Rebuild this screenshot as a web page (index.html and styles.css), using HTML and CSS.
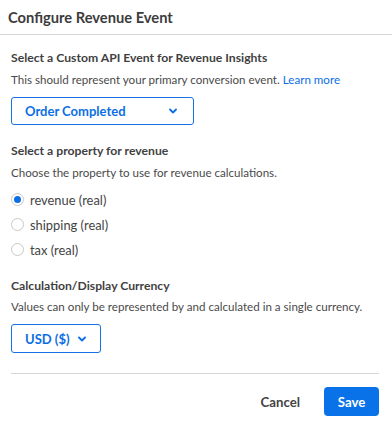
FILE: index.html
```html
<!DOCTYPE html>
<html>
<head>
<meta charset="utf-8">
<link rel="stylesheet" href="styles.css">
</head>
<body>
<div class="modal">
  <div class="header"><h1 class="title">Configure Revenue Event</h1></div>
  <div class="content">
    <h2 class="heading">Select a Custom API Event for Revenue Insights</h2>
    <p class="desc">This should represent your primary conversion event. <a class="link" href="#">Learn more</a></p>
    <button class="select select-event">
      <span>Order Completed</span>
      <svg class="chev" width="8" height="6" viewBox="0 0 8 6"><path d="M1 1.5 L4 4.5 L7 1.5" fill="none" stroke="currentColor" stroke-width="1.8" stroke-linecap="round" stroke-linejoin="round"/></svg>
    </button>

    <h2 class="heading h-gap">Select a property for revenue</h2>
    <p class="desc">Choose the property to use for revenue calculations.</p>
    <div class="radios">
      <label class="radio"><span class="dot checked"></span><span>revenue (real)</span></label>
      <label class="radio"><span class="dot"></span><span>shipping (real)</span></label>
      <label class="radio"><span class="dot"></span><span>tax (real)</span></label>
    </div>

    <h2 class="heading h-gap2">Calculation/Display Currency</h2>
    <p class="desc d-tight">Values can only be represented by and calculated in a single currency.</p>
    <button class="select select-cur">
      <span>USD ($)</span>
      <svg class="chev" width="8" height="6" viewBox="0 0 8 6"><path d="M1 1.5 L4 4.5 L7 1.5" fill="none" stroke="currentColor" stroke-width="1.8" stroke-linecap="round" stroke-linejoin="round"/></svg>
    </button>

    <div class="footer">
      <button class="btn-cancel">Cancel</button>
      <button class="btn-save">Save</button>
    </div>
  </div>
</div>
</body>
</html>
```
FILE: styles.css
```css
* { box-sizing: border-box; }
html, body { margin: 0; padding: 0; background: #fff; }
body { font-family: Lato, "Liberation Sans", sans-serif; color: #454545; }
.modal { width: 392px; }
.header {
  height: 35px;
  border-bottom: 1px solid #d8d8d8;
  padding-left: 8px;
  display: flex;
  align-items: center;
}
.title { margin: 0; font-size: 14.7px; font-weight: 700; color: #3c3c3c; line-height: 18px; }
.content { padding: 15px 13px 0 11px; }
.heading { margin: 0; font-size: 12.2px; font-weight: 700; line-height: 16px; color: #3f3f3f; }
.h-gap { margin-top: 18px; }
.h-gap2 { margin-top: 16px; }
.desc { margin: 6px 0 0; font-size: 11.6px; line-height: 16px; color: #4a4a4a; }
.d-tight { margin-top: 5px; }
.link { color: #0b6fe3; text-decoration: none; }
.select {
  margin-top: 9px;
  display: flex;
  align-items: center;
  justify-content: space-between;
  height: 28px;
  border: 1px solid #1671e6;
  border-radius: 3px;
  background: #fff;
  color: #0b6fe3;
  font-family: inherit;
  font-size: 13px;
  font-weight: 700;
  padding: 0 16px 0 13px;
  cursor: pointer;
}
.select-event { width: 183px; }
.select-cur { width: 90px; height: 29px; padding-right: 14px; }
.chev { display: block; }
.radios { margin-top: 6px; display: flex; flex-direction: column; }
.radio {
  height: 25px;
  display: flex;
  align-items: center;
  gap: 6px;
  font-size: 12.9px;
  color: #444;
}
.dot {
  width: 13px; height: 13px;
  border: 1px solid #c8c8c8;
  border-radius: 50%;
  display: flex; align-items: center; justify-content: center;
}
.dot.checked::after {
  content: "";
  width: 7px; height: 7px; border-radius: 50%;
  background: #0b6fe3;
}
.footer {
  margin-top: 20px;
  border-top: 1px solid #d6d6d6;
  padding-top: 13px;
  display: flex;
  justify-content: flex-end;
  align-items: center;
  gap: 12px;
}
.btn-cancel {
  border: 0; background: none;
  font-family: inherit; font-size: 13.2px; font-weight: 700; color: #444;
  height: 29px; padding: 0 12px; cursor: pointer;
}
.btn-save {
  border: 0; border-radius: 4px;
  background: #0a72e8; color: #fff;
  font-family: inherit; font-size: 13.2px; font-weight: 700;
  height: 29px; width: 55px; cursor: pointer;
}
```
